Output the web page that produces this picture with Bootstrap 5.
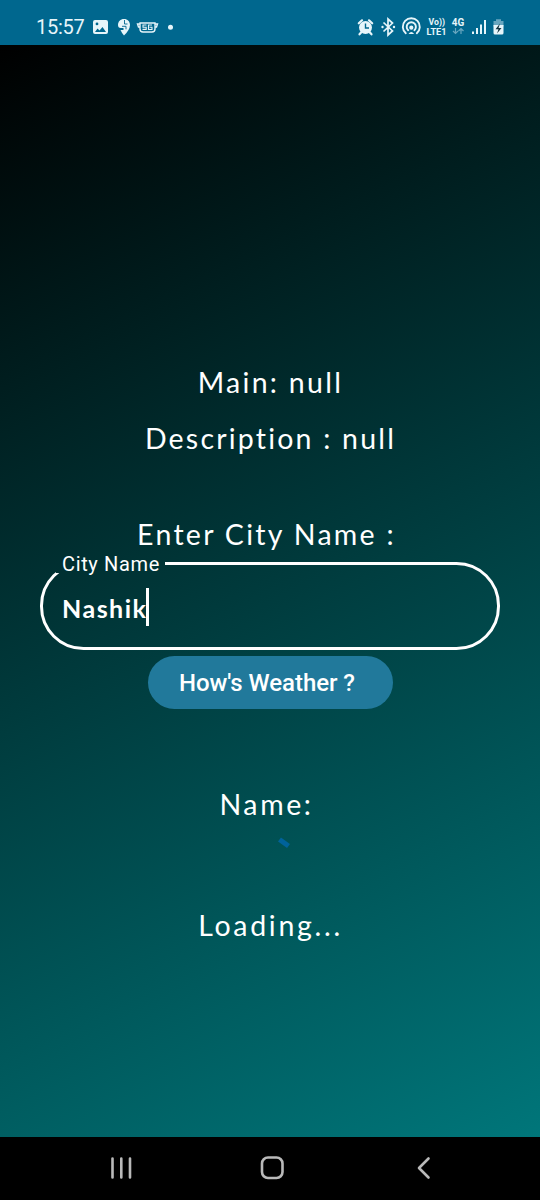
<!DOCTYPE html>
<html lang="en">
<head>
<meta charset="utf-8">
<meta name="viewport" content="width=device-width, initial-scale=1">
<title>Weather</title>
<link href="https://cdn.jsdelivr.net/npm/bootstrap@5.3.0/dist/css/bootstrap.min.css" rel="stylesheet">
<style>
  body { font-family: Roboto, sans-serif; background: #000; }
  .screen { height: 1200px; }
  .statusbar { height: 45px; background: #00678e; padding: 8px 35px 0 36px; }
  .clock { font-size: 20px; line-height: 38px; width: 49px; letter-spacing: -.25px; color: #e6f5fa; }
  .app { background: linear-gradient(153.7deg, #000 0%, #00767a 100%); padding-top: 317px; }
  .say { font-family: Lato, sans-serif; font-size: 28.500px; line-height: 40px; height: 40px; white-space: pre; letter-spacing: 2.3px; padding-left: 1px; }
  .say-desc { letter-spacing: 2.2px; }
  .say-ask { margin-top: 56px; padding-right: 8px; }
  .say-name { letter-spacing: 2.6px; margin-top: 75px; padding-right: 8px; }
  .say-load { letter-spacing: 2.7px; margin-top: 51px; }
  .city { width: 460px; height: 97px; border: 3px solid #fff; border-radius: 43.5px; padding: 0 0 0 19px; margin: -1px 0 0 40px; }
  .city legend { float: none; width: 109px; height: 20px; line-height: 22px; font-size: 20px; margin: 0 0 0 -6px; padding: 0 0 0 6px; letter-spacing: .65px; white-space: nowrap; }
  .typed { font-family: Lato, sans-serif; font-weight: 700; font-size: 25px; line-height: 36px; margin-top: 14px; letter-spacing: 1.5px; }
  .typed span:first-child { padding-top: 3px; margin-right: -1px; }
  .caret { width: 3px; height: 38px; background: #fff; }
  .ask { width: 245px; height: 53px; background: #21799b; font-size: 24px; font-weight: 500; line-height: 55px; margin-top: 6px; letter-spacing: -.05px; }
  .ask span { margin-right: 6px; }
  .navkeys { height: 63px; }
</style>
</head>
<body>
<div class="screen d-flex flex-column text-white overflow-hidden">
  <header class="statusbar d-flex flex-shrink-0">
    <span class="clock">15:57</span>
    <svg width="95" height="37" viewBox="85 8 95 37" fill="#e6f5fa">
      <path fill-rule="evenodd" d="M95 20h11q2 0 2 2v10q0 2-2 2H95q-2 0-2-2V22q0-2 2-2zm0 12h11l-3.5-5-3 3.5-2-2zM97 22.500a1.400 1.400 0 1 0 0 2.800 1.400 1.400 0 0 0 0-2.800z"/>
      <path d="M124 19c-3.600 0-6 2.600-6 6 0 2 1 3 2.500 3h3v2h-3q1.300 3 3.500 5.500 5.800-5.500 6-10.500c0-3.400-2.400-6-6-6z"/>
      <path d="M124.500 20v4h3M122 26.300h4v3" fill="none" stroke="#00678e" stroke-width=".9"/>
      <path d="M140 23h15v6q0 3-3 3h-9q-3 0-3-3zM140 24h-2.500l1 3h2M155 24h2.500l-1 3h-2" fill="none" stroke="#e6f5fa" stroke-width="1.400"/>
      <path d="M146.500 25h-3.500v2.200h3.200v2.200H142.500M152 25h-3.500v4.500h3.500v-2.200h-2.500" fill="none" stroke="#e6f5fa" stroke-width="1.100"/>
      <circle cx="170.500" cy="27.300" r="2.500"/>
    </svg>
    <svg class="ms-auto" width="150" height="37" viewBox="355 8 150 37" fill="#e6f5fa" font-family="Roboto, sans-serif">
      <circle cx="365.500" cy="27.500" r="6.500"/>
      <path d="M358.800 23.300l3.200-3M372.200 23.300l-3.200-3M361.500 32l-2 2.300M369.500 32l2 2.300" stroke="#e6f5fa" stroke-width="2.200" stroke-linecap="round"/>
      <path d="M365.500 23.500v4.500h3.500" fill="none" stroke="#00678e" stroke-width="1.400"/>
      <path d="M383.500 22.500l9 8.500-4.500 4V19l4.500 4-9 8.500" fill="none" stroke="#e6f5fa" stroke-width="1.700"/>
      <circle cx="382.500" cy="27" r="1.200"/><circle cx="394" cy="27" r="1.200"/>
      <path d="M405.800 33.200a8.500 8.500 0 1 1 11 0M408.200 30.200a4.600 4.600 0 1 1 6.200 0" fill="none" stroke="#e6f5fa" stroke-width="1.900" stroke-linecap="round"/>
      <circle cx="411.300" cy="27.700" r="2.100"/><path d="M408.500 34q2.800-4 5.600 0z"/>
      <text x="428.500" y="25" font-size="8.500" font-weight="700" textLength="16.500" lengthAdjust="spacingAndGlyphs">Vo))</text>
      <text x="426.500" y="34.800" font-size="9" font-weight="700" textLength="20" lengthAdjust="spacingAndGlyphs">LTE1</text>
      <text x="451.800" y="26.300" font-size="10.500" font-weight="700" textLength="12.500" lengthAdjust="spacingAndGlyphs">4G</text>
      <g fill="none" stroke="#e6f5fa" stroke-width="1.200" opacity=".45"><path d="M455.500 28v5.500m-2.500-2.500 2.500 2.500 2.500-2.500M461 34v-5.500m-2.500 2.500 2.500-2.500 2.500 2.500"/></g>
      <path d="M472 31.500h2V34h-2zM476 28h2v6h-2zM480 24.500h2V34h-2zM484 20h2v14h-2z"/>
      <path d="M496 19.200h5V21h2.500v5.500h-10V21h2.500z" opacity=".45"/>
      <path d="M493.500 25h10v8q0 1.500-1.500 1.500h-7q-1.500 0-1.500-1.500z"/>
      <path d="M500 23.500l-4.500 5.700h3l-1.500 4.300 4.500-5.500h-3z" fill="#15333f"/>
    </svg>
  </header>

  <main class="app flex-grow-1">
    <div class="say text-center">Main: null</div>
    <div class="say say-desc text-center mt-3">Description : null</div>
    <div class="say say-ask text-center">Enter City Name :</div>
    <fieldset class="city">
      <legend>City Name</legend>
      <div class="typed d-flex align-items-center"><span>Nashik</span><span class="caret"></span></div>
    </fieldset>
    <button class="ask btn rounded-pill border-0 p-0 d-block mx-auto text-white"><span>How's Weather ?</span></button>
    <div class="say say-name text-center">Name:</div>
    <svg class="d-block" width="540" height="30" viewBox="0 824 540 30"><path d="M279.500 839.500l9 6.500" stroke="#00629a" stroke-width="5"/></svg>
    <div class="say say-load text-center">Loading...</div>
  </main>

  <nav class="navkeys bg-black flex-shrink-0">
    <svg class="d-block" width="540" height="63" viewBox="0 1137 540 63" fill="none" stroke="#b9b9b9" stroke-width="2.600" stroke-linecap="round" stroke-linejoin="round">
      <path d="M112.500 1158.500v19M121.300 1158.500v19M130 1158.500v19"/>
      <rect x="262" y="1157.500" width="20.500" height="20.500" rx="6"/>
      <path d="M428.500 1158.500l-9.500 9.500 9.500 9.500"/>
    </svg>
  </nav>
</div>
<script src="https://cdn.jsdelivr.net/npm/bootstrap@5.3.0/dist/js/bootstrap.bundle.min.js"></script>
</body>
</html>
